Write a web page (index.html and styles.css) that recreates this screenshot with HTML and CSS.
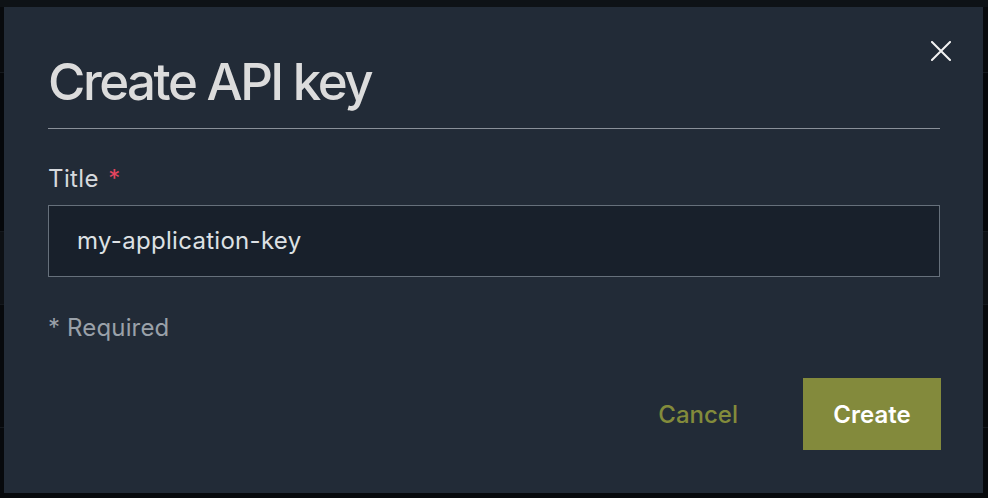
FILE: index.html
```html
<!DOCTYPE html>
<html lang="en">
<head>
<meta charset="utf-8">
<title>Create API key</title>
<link rel="stylesheet" href="styles.css">
</head>
<body>
<div class="page">
  <div class="page-top"></div>
  <div class="page-row page-row-head"></div>
  <div class="page-row page-row-tall"></div>
  <div class="page-row page-row-hl"></div>
  <div class="page-row page-row-mid"></div>
  <div class="page-row page-row-last"></div>
</div>

<div class="modal" role="dialog" aria-labelledby="modal-title">
  <button class="close" aria-label="Close">
    <svg width="20" height="20" viewBox="0 0 20 20" aria-hidden="true">
      <path d="M1 1 L19 19 M19 1 L1 19" stroke="#f2f2f2" stroke-width="2" fill="none" stroke-linecap="square"/>
    </svg>
  </button>
  <h1 class="modal-title" id="modal-title">Create API key</h1>
  <div class="divider"></div>
  <label class="field-label">Title <span class="req">*</span></label>
  <div class="input">my-application-key</div>
  <p class="required-note">* Required</p>
  <div class="actions">
    <button class="btn btn-cancel">Cancel</button>
    <button class="btn btn-create">Create</button>
  </div>
</div>
</body>
</html>
```
FILE: styles.css
```css
* { box-sizing: border-box; }

html, body {
  margin: 0;
  padding: 0;
  height: 100%;
}

body {
  background: #07090c;
  font-family: Inter, "Noto Sans", "Liberation Sans", sans-serif;
  overflow: hidden;
}

.page {
  display: flex;
  flex-direction: column;
}

.page-top {
  height: 7px;
  background: #0e1216;
}

.page-row {
  border-bottom: 1px solid #14181d;
  background: #07090c;
}

.page-row-head { height: 66px; background: #080a0d; }
.page-row-tall { height: 159px; background: #05070a; }
.page-row-hl { height: 73px; background: #0d1014; }
.page-row-mid { height: 123px; background: #07090c; }
.page-row-last { height: 70px; background: #07090c; border-bottom: none; }

.modal {
  position: fixed;
  top: 7px;
  left: 4px;
  width: 979px;
  height: 486px;
  background: #222b37;
  padding: 44px 43px 43px 44px;
  display: flex;
  flex-direction: column;
}

.close {
  position: absolute;
  top: 34px;
  right: 32px;
  width: 20px;
  height: 20px;
  padding: 0;
  border: 0;
  background: transparent;
  display: flex;
  cursor: pointer;
}

.modal-title {
  margin: 0;
  font-size: 51px;
  line-height: 62px;
  font-weight: 500;
  color: #dcdcdc;
  letter-spacing: -2.5px;
}

.divider {
  margin-top: 15px;
  height: 1px;
  background: #8a9099;
}

.field-label {
  margin-top: 34px;
  font-size: 24px;
  line-height: 32px;
  color: #d6d9dd;
  font-weight: 400;
  letter-spacing: 0.4px;
}

.req {
  color: #e5455f;
  margin-left: 2px;
}

.input {
  margin-top: 10px;
  height: 72px;
  border: 1.5px solid #66707b;
  background: #18202b;
  display: flex;
  align-items: center;
  padding-left: 28px;
  font-size: 24px;
  line-height: 32px;
  color: #dde0e4;
  letter-spacing: 0.3px;
}

.required-note {
  margin: 35px 0 0;
  font-size: 24px;
  line-height: 32px;
  color: #9aa1a9;
  letter-spacing: 0.15px;
}

.actions {
  margin-top: 34px;
  margin-right: -1px;
  display: flex;
  justify-content: flex-end;
  gap: 35px;
}

.btn {
  height: 72px;
  padding: 0 30px;
  border: 0;
  font-family: inherit;
  font-size: 24px;
  cursor: pointer;
}

.btn-cancel {
  background: transparent;
  color: #838b3b;
  font-weight: 500;
}

.btn-create {
  width: 138px;
  background: #838a3c;
  color: #ffffff;
  font-weight: 600;
}
```
